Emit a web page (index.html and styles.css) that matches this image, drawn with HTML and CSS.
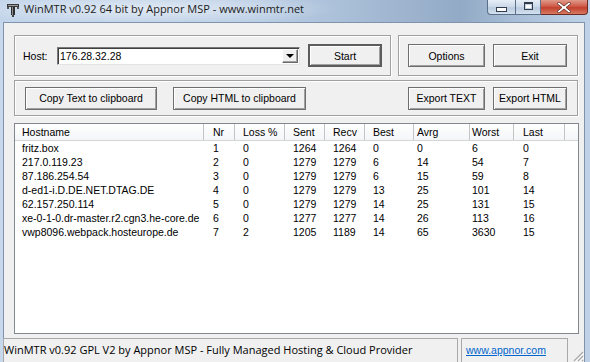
FILE: index.html
```html
<!DOCTYPE html>
<html lang="en">
<head>
    <meta charset="UTF-8">
    <title>WinMTR</title>
    <link rel="stylesheet" href="styles.css">
</head>
<body>
    <div class="window">
        <div class="titlebar">
            <svg class="app-icon" width="12" height="13" viewBox="0 0 12 13">
                <rect x="0" y="0" width="12" height="3" fill="#3a3a3a"/>
                <rect x="1" y="1" width="10" height="1" fill="#9a9a9a"/>
                <rect x="0" y="3" width="2" height="2" fill="#555"/>
                <rect x="10" y="3" width="2" height="2" fill="#555"/>
                <rect x="4" y="3" width="4" height="8" fill="#2e2e2e"/>
                <rect x="5" y="3" width="1" height="8" fill="#8c8c8c"/>
                <rect x="5" y="11" width="2" height="2" fill="#444"/>
            </svg>
            <span class="title">WinMTR v0.92 64 bit by Appnor MSP - www.winmtr.net</span>
            <div class="caption-btns">
                <div class="cap cap-min"><span class="glyph-min"></span></div>
                <div class="cap cap-max"><span class="glyph-max"></span></div>
                <div class="cap cap-close">
                    <svg width="14" height="11" viewBox="0 0 14 11">
                        <path d="M2 0 L7 4 L12 0 L14 1.5 L9 5.5 L14 9.5 L12 11 L7 7 L2 11 L0 9.5 L5 5.5 L0 1.5 Z" fill="#fff" stroke="#5a2a22" stroke-width="0.8"/>
                    </svg>
                </div>
            </div>
        </div>

        <div class="client">
            <div class="panels">
                <div class="top-row">
                    <div class="group host-group">
                        <label for="host">Host:</label>
                        <div class="combo">
                            <span class="combo-text" id="host">176.28.32.28</span>
                            <div class="combo-arrow"><span class="arrow-down"></span></div>
                        </div>
                        <button class="btn btn-default">Start</button>
                    </div>
                    <div class="group opts-group">
                        <button class="btn w77">Options</button>
                        <button class="btn w74">Exit</button>
                    </div>
                </div>

                <div class="group export-group">
                    <button class="btn w132">Copy Text to clipboard</button>
                    <button class="btn w133">Copy HTML to clipboard</button>
                    <button class="btn w77 push">Export TEXT</button>
                    <button class="btn w74">Export HTML</button>
                </div>

                <div class="listview">
                    <div class="lv-head">
                        <span>Hostname</span><span>Nr</span><span>Loss %</span><span>Sent</span><span>Recv</span><span>Best</span><span>Avrg</span><span>Worst</span><span>Last</span><span></span>
                    </div>
                    <div class="lv-row"><span>fritz.box</span><span>1</span><span>0</span><span>1264</span><span>1264</span><span>0</span><span>0</span><span>6</span><span>0</span></div>
                    <div class="lv-row"><span>217.0.119.23</span><span>2</span><span>0</span><span>1279</span><span>1279</span><span>6</span><span>14</span><span>54</span><span>7</span></div>
                    <div class="lv-row"><span>87.186.254.54</span><span>3</span><span>0</span><span>1279</span><span>1279</span><span>6</span><span>15</span><span>59</span><span>8</span></div>
                    <div class="lv-row"><span>d-ed1-i.D.DE.NET.DTAG.DE</span><span>4</span><span>0</span><span>1279</span><span>1279</span><span>13</span><span>25</span><span>101</span><span>14</span></div>
                    <div class="lv-row"><span>62.157.250.114</span><span>5</span><span>0</span><span>1279</span><span>1279</span><span>14</span><span>25</span><span>131</span><span>15</span></div>
                    <div class="lv-row"><span>xe-0-1-0.dr-master.r2.cgn3.he-core.de</span><span>6</span><span>0</span><span>1277</span><span>1277</span><span>14</span><span>26</span><span>113</span><span>16</span></div>
                    <div class="lv-row"><span>vwp8096.webpack.hosteurope.de</span><span>7</span><span>2</span><span>1205</span><span>1189</span><span>14</span><span>65</span><span>3630</span><span>15</span></div>
                </div>
            </div>

            <div class="statusbar">
                <div class="sb-panel sb-main">WinMTR v0.92 GPL V2 by Appnor MSP - Fully Managed Hosting &amp; Cloud Provider</div>
                <div class="sb-panel sb-link"><a href="#">www.appnor.com</a></div>
                <svg class="grip" width="12" height="12" viewBox="0 0 12 12">
                    <path d="M11 2 L2 11 M11 6 L6 11 M11 10 L10 11" stroke="#a8a8a8" stroke-width="1.2"/>
                    <path d="M12 3 L3 12 M12 7 L7 12" stroke="#fff" stroke-width="1"/>
                </svg>
            </div>
        </div>
    </div>
</body>
</html>
```

FILE: styles.css
```css
body {
    margin: 0;
    width: 590px;
    height: 362px;
    overflow: hidden;
    font-family: "Liberation Sans", Arial, sans-serif;
    font-size: 10.5px;
    color: #000;
    background: linear-gradient(to right, #c7d8ec, #bcd0e6 60%, #a9bfd9 85%, #c0d2e7);
}

.window {
    display: flex;
    flex-direction: column;
    height: 362px;
}

/* title bar */

.titlebar {
    height: 22px;
    display: flex;
    align-items: flex-start;
    background:
        radial-gradient(ellipse 190px 16px at 150px 9px, rgba(255, 255, 255, 0.55), rgba(255, 255, 255, 0) 100%),
        linear-gradient(to right, #c3d5ea 0%, #b9cde4 45%, #93aac6 78%, #a9bfd8 88%, #bfd1e6 100%);
}

.app-icon {
    margin: 4px 5px 0 7px;
}

.title {
    font-family: "Open Sans", "Liberation Sans", sans-serif;
    font-size: 11px;
    line-height: 18px;
    color: #1b1b1b;
}

.caption-btns {
    margin-left: auto;
    margin-right: 2px;
    display: flex;
}

.cap {
    height: 15px;
    box-sizing: border-box;
    border: 1px solid #5b6f88;
    border-top: none;
    display: flex;
    align-items: center;
    justify-content: center;
    background: linear-gradient(to bottom, #e6eef7, #cbd8e8 50%, #b9cadf 55%, #d4e1ef);
}

.cap-min {
    width: 28px;
    border-radius: 0 0 0 4px;
    border-right: none;
}

.cap-max {
    width: 26px;
}

.cap-close {
    width: 47px;
    border-left: none;
    border-color: #6b2a24;
    border-radius: 0 0 4px 0;
    background: linear-gradient(to bottom, #e09a8a, #cf5a48 45%, #c2402e 55%, #d97a5e);
}

.glyph-min {
    width: 9px;
    height: 3px;
    margin-top: 5px;
    background: #fff;
    border: 1px solid #333c4a;
}

.glyph-max {
    width: 7px;
    height: 5px;
    background: #fff;
    border: 1px solid #333c4a;
    border-top-width: 2px;
    box-shadow: inset 0 0 0 1px #c6d3e2;
    margin-top: -2px;
}

/* client area */

.client {
    flex: 1;
    display: flex;
    flex-direction: column;
    margin: 0 5px 0 3px;
    background-color: #f0f0f0;
    border: 1px solid #7f93ad;
    border-bottom: none;
}

.panels {
    flex: 1;
    display: flex;
    flex-direction: column;
    gap: 4px;
    padding: 12px 6px 4px 10px;
}

.top-row {
    display: flex;
    gap: 7px;
}

.group {
    box-sizing: border-box;
    display: flex;
    align-items: center;
    border: 1px solid #a0a0a0;
    box-shadow: inset 1px 1px 0 #fff, 1px 1px 0 #fff;
}

.host-group {
    width: 377px;
    height: 41px;
    padding-left: 8px;
}

.host-group label {
    width: 34px;
}

.opts-group {
    flex: 1;
    height: 41px;
    padding: 0 10px 0 9px;
    gap: 8px;
}

.export-group {
    height: 36px;
    padding: 0 10px;
}

.export-group .w133 {
    margin-left: 16px;
}

.export-group .w74 {
    margin-left: 8px;
}

.push {
    margin-left: auto;
}

.combo {
    width: 243px;
    height: 18px;
    box-sizing: border-box;
    display: flex;
    align-items: center;
    background: #fff;
    border: 1px solid #7a7a7a;
    border-right-color: #e3e3e3;
    border-bottom-color: #e3e3e3;
    box-shadow: inset 1px 1px 0 #404040;
}

.combo-text {
    flex: 1;
    padding-left: 2px;
}

.combo-arrow {
    width: 16px;
    height: 14px;
    margin-right: 1px;
    box-sizing: border-box;
    background: #f0f0f0;
    border: 1px solid #fff;
    border-right-color: #696969;
    border-bottom-color: #696969;
    box-shadow: inset -1px -1px 0 #a0a0a0;
    display: flex;
    align-items: center;
    justify-content: center;
}

.arrow-down {
    width: 0;
    height: 0;
    border-left: 4px solid transparent;
    border-right: 4px solid transparent;
    border-top: 4px solid #000;
}

.btn {
    height: 23px;
    box-sizing: border-box;
    padding: 0;
    font-family: "Liberation Sans", Arial, sans-serif;
    font-size: 10.5px;
    color: #000;
    background-color: #f0f0f0;
    border: 1px solid #6e6e6e;
    box-shadow: inset 1px 1px 0 #fff, inset -1px -1px 0 #a0a0a0;
}

.btn-default {
    width: 74px;
    margin-left: 8px;
    border: 2px solid #5c5c5c;
}

.w74 { width: 74px; }
.w77 { width: 77px; }
.w132 { width: 132px; }
.w133 { width: 133px; }

/* list view */

.listview {
    flex: 1;
    margin: 3px -1px 0 0;
    background: #fff;
    border: 1px solid #828790;
}

.lv-head,
.lv-row {
    display: grid;
    grid-template-columns: 189px 31px 50px 40px 40px 49px 56px 44px 51px 1fr;
}

.lv-head {
    height: 16px;
    background: linear-gradient(to bottom, #fff, #f4f5f7);
    border-bottom: 1px solid #d5d5d5;
    line-height: 16px;
}

.lv-head span {
    border-right: 1px solid #c4c4c4;
    white-space: nowrap;
}

.lv-head span:last-child {
    border-right: none;
}

.lv-row {
    height: 14px;
    line-height: 14px;
}

.lv-row span {
    white-space: nowrap;
}

.lv-head span,
.lv-row span {
    padding-left: 8px;
}

.lv-head span:nth-child(1),
.lv-row span:nth-child(1) {
    padding-left: 7px;
}

.lv-head span:nth-child(2),
.lv-row span:nth-child(2),
.lv-head span:nth-child(9),
.lv-row span:nth-child(9) {
    padding-left: 9px;
}

.lv-head span:nth-child(7),
.lv-row span:nth-child(7) {
    padding-left: 3px;
}

.lv-head span:nth-child(8),
.lv-row span:nth-child(8) {
    padding-left: 2px;
}

/* status bar */

.statusbar {
    height: 24px;
    display: flex;
    gap: 3px;
    font-family: "Open Sans", "Liberation Sans", sans-serif;
    font-size: 11px;
}

.sb-panel {
    box-sizing: border-box;
    border: 1px solid #a9a9a9;
    border-bottom: none;
    line-height: 22px;
    white-space: nowrap;
}

.sb-main {
    width: 455px;
    margin-left: -1px;
}

.sb-link {
    width: 107px;
    padding-left: 4px;
}

.sb-link a {
    font-family: "Liberation Sans", Arial, sans-serif;
    font-size: 10.5px;
    color: #0066cc;
}

.grip {
    margin-left: auto;
    align-self: flex-end;
}
```
